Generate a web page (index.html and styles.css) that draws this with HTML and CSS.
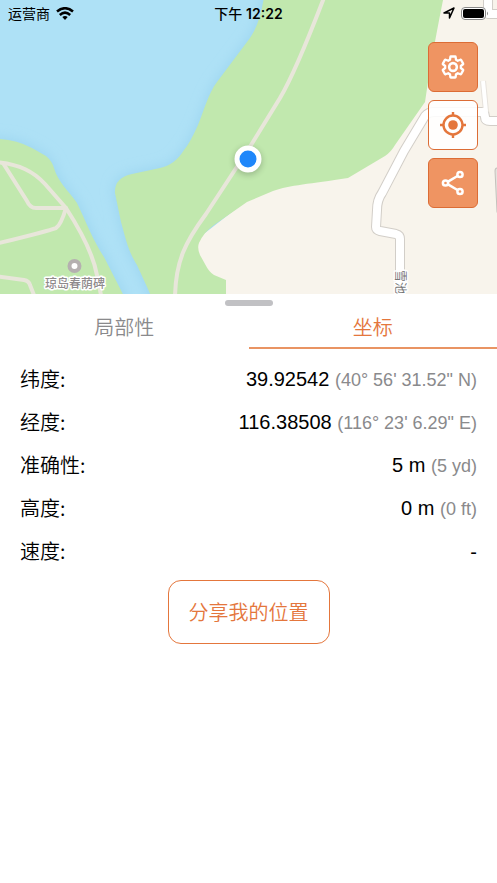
FILE: index.html
```html
<!DOCTYPE html>
<html lang="zh-CN">
<head>
<meta charset="utf-8">
<meta name="viewport" content="width=device-width, initial-scale=1">
<title>坐标</title>
<link rel="stylesheet" href="styles.css">
</head>
<body>
<div class="app">
  <section class="map">
    <svg class="map-canvas" viewBox="0 0 497 294" preserveAspectRatio="xMidYMid slice" aria-hidden="true">
      <defs>
        <filter id="soft" x="-20%" y="-20%" width="140%" height="140%"><feGaussianBlur stdDeviation="6"/></filter>
        <filter id="shade" x="-50%" y="-50%" width="200%" height="200%"><feGaussianBlur stdDeviation="3"/></filter>
        <path id="park" d="M265-10C262 12 258 28 247 42L217 82C208 94 205 108 198 125Q190 143 184 150C178 160 170 166 160 168L132 174Q114 178 115 193L121 222C127 244 129 252 137 265L153 300H226V280L214 275Q209 272 205 264L200 255Q197 248 199 243C202 236 207 230 214 225L247 202L273 191C290 185 310 184 348 178L385 156Q391 152 395 145L425 102Q431 60 443 0V-10Z"/>
        <path id="shore" d="M-10 139H0Q17 140 32 148L46 156Q52 161 54 168C58 182 68 190 77 203C87 224 94 242 104 257L126 300H-10Z"/>
      </defs>
      <rect class="water" width="497" height="294"/>
      <g class="shallows" filter="url(#soft)"><use href="#park"/><use href="#shore"/></g>
      <path class="land" d="M196 300V240L260 190L350 170L420 95L438-5H500V300Z"/>
      <g class="grass"><use href="#park"/><use href="#shore"/></g>
      <g class="trails">
        <path d="M-5 162C20 164 34 172 45 184L66 208Q92 248 97 275L102 300"/>
        <path d="M3 163L27 201Q30 208 36 208H66Q61 225 56 228Q48 231-5 244"/>
        <path d="M-5 276L24 280Q29 281 30 285L36 300"/>
        <path d="M325-5Q296 71 280 98L248 150L206 214C186 241 175 261 175 300"/>
      </g>
      <g class="street-edge">
        <path d="M434 112H486M434 112Q428 112 425 116L404 151L382 193Q377 200 377 210L376 227Q376 230 380 231L396 234Q400 235 400 239V300"/>
        <path d="M484 112L485 117Q485 121 490 121H502M488-5V14H502"/>
        <path class="lane-edge" d="M483 81L486 112"/>
      </g>
      <g class="street">
        <path d="M434 112H486M434 112Q428 112 425 116L404 151L382 193Q377 200 377 210L376 227Q376 230 380 231L396 234Q400 235 400 239V300"/>
        <path d="M484 112L485 117Q485 121 490 121H502M488-5V14H502"/>
        <path class="lane" d="M483 81L486 112"/>
      </g>
      <path class="block" d="M500 168H497Q495 168 495 171L497 212H500Z"/>
      <circle cx="74.500" cy="266" r="5" class="poi"/>
      <text class="poi-name" x="75" y="288">琼岛春荫碑</text>
      <text class="street-name" transform="translate(396 270) rotate(90)">雪池</text>
      <circle class="dot-shadow" cx="248" cy="161" r="14" filter="url(#shade)"/>
      <circle class="dot" cx="248" cy="159" r="11"/>
    </svg>

    <header class="status">
      <div class="carrier"><span>运营商</span>
        <svg width="18" height="13" viewBox="0 0 18 13" aria-hidden="true"><g fill="none" stroke="#000" stroke-width="2.600"><path d="M1 4.500Q9-2 17 4.500"/><path d="M3.800 7.900Q9 3.500 14.200 7.900"/></g><path d="M6.300 10Q9 8 11.700 10L9 13Z"/></svg>
      </div>
      <div class="time">下午 <b>12:22</b></div>
      <div class="power">
        <svg width="12" height="12" viewBox="0 0 12 12" aria-hidden="true"><path d="M1 6L11 1L6.500 11V6Z" fill="none" stroke="#000" stroke-width="1.500" stroke-linejoin="round"/></svg>
        <svg width="28" height="13" viewBox="0 0 28 13" aria-hidden="true"><rect x=".5" y=".5" width="24" height="12" rx="3.500" fill="#fff" stroke="#888"/><rect x="2" y="2" width="21" height="9" rx="2"/><path d="M26 4.500Q28 6.500 26 8.500Z" fill="#888"/></svg>
      </div>
    </header>

    <nav class="tools" aria-label="地图">
      <button class="tool" type="button" aria-label="设置">
        <svg viewBox="0 0 24 24" width="28" height="28"><g fill="none" stroke="currentColor" stroke-width="2.200" stroke-linejoin="round"><path transform="translate(12 12) scale(.9) translate(-12 -12)" d="M19.430 12.980c.04-.32.07-.64.07-.98s-.03-.66-.07-.98l2.110-1.650c.19-.15.24-.42.12-.64l-2-3.460c-.12-.22-.39-.3-.61-.22l-2.490 1c-.52-.4-1.080-.73-1.690-.98l-.38-2.650C14.460 2.180 14.250 2 14 2h-4c-.25 0-.46.18-.49.42l-.38 2.650c-.61.25-1.170.59-1.690.98l-2.490-1c-.23-.09-.49 0-.61.22l-2 3.460c-.13.22-.07.49.12.64l2.110 1.650c-.04.32-.07.65-.07.98s.03.66.07.98l-2.110 1.650c-.19.15-.24.42-.12.64l2 3.460c.12.22.39.3.61.22l2.490-1c.52.4 1.080.73 1.690.98l.38 2.650c.03.24.24.42.49.42h4c.25 0 .46-.18.49-.42l.38-2.650c.61-.25 1.170-.59 1.690-.98l2.490 1c.23.09.49 0 .61-.22l2-3.460c.12-.22.07-.49-.12-.64z"/><circle cx="12" cy="12" r="3.300"/></g></svg>
      </button>
      <button class="tool tool-on" type="button" aria-label="定位">
        <svg viewBox="0 0 28 28" width="28" height="28"><g fill="none" stroke="currentColor" stroke-width="2.400"><circle cx="14" cy="14" r="9.500"/><path d="M14 1V5M14 23V27M1 14H5M23 14H27"/></g><circle cx="14" cy="14" r="4.800" fill="currentColor"/></svg>
      </button>
      <button class="tool" type="button" aria-label="分享">
        <svg viewBox="0 0 28 28" width="28" height="28"><g fill="none" stroke="currentColor" stroke-width="2.500"><circle cx="6.500" cy="14" r="2.600"/><circle cx="21" cy="5.500" r="2.600"/><circle cx="21" cy="22.500" r="2.600"/><path d="M9 12.600L18.500 7M9 15.400L18.500 21"/></g></svg>
      </button>
    </nav>
  </section>

  <main class="sheet">
    <div class="grip"></div>
    <div class="tabs" role="tablist">
      <button class="tab" type="button" role="tab" aria-selected="false">局部性</button>
      <button class="tab tab-on" type="button" role="tab" aria-selected="true">坐标</button>
    </div>
    <table class="facts">
      <tbody>
        <tr><th scope="row">纬度:</th><td>39.92542 <small>(40° 56' 31.52" N)</small></td></tr>
        <tr><th scope="row">经度:</th><td>116.38508 <small>(116° 23' 6.29" E)</small></td></tr>
        <tr><th scope="row">准确性:</th><td>5 m <small>(5 yd)</small></td></tr>
        <tr><th scope="row">高度:</th><td>0 m <small>(0 ft)</small></td></tr>
        <tr><th scope="row">速度:</th><td>-</td></tr>
      </tbody>
    </table>
    <button class="share" type="button">分享我的位置</button>
  </main>
</div>
</body>
</html>
```
FILE: styles.css
```css
* {
  box-sizing: border-box;
}

body {
  margin: 0;
  background: #fff;
  color: #000;
  font-family: "Liberation Sans", "Noto Sans CJK SC", sans-serif;
  font-size: 20px;
}

button {
  font: inherit;
  cursor: pointer;
}

.app {
  display: flex;
  flex-direction: column;
  min-height: 100vh;
}

/* Map */
.map {
  position: relative;
  height: 33.3vh;
  min-height: 220px;
  overflow: hidden;
}

.map-canvas {
  display: block;
  width: 100%;
  height: 100%;
}

.water { fill: #aee1f6; }
.shallows { fill: #9fd7f1; stroke: #9fd7f1; stroke-width: 4; }
.land { fill: #f8f4ec; }
.grass { fill: #c1e8ae; }
.trails { fill: none; stroke: #e8e6da; stroke-width: 4; stroke-linejoin: round; }
.street-edge { fill: none; stroke: #d2cec8; stroke-width: 10; stroke-linejoin: round; }
.street { fill: none; stroke: #fff; stroke-width: 8; stroke-linejoin: round; }
.lane-edge { stroke: #e6e2dc; stroke-width: 6; }
.lane { stroke-width: 4; }
.block { fill: #e6e3de; stroke: #c4c1bc; }
.poi { fill: #fff; stroke: #b5b0b0; stroke-width: 4; }

.poi-name,
.street-name {
  font-family: "Noto Sans CJK SC", sans-serif;
  font-size: 12px;
  fill: #8f8a8c;
  stroke: #fff;
  stroke-width: 3px;
  stroke-linejoin: round;
  paint-order: stroke;
}

.poi-name { text-anchor: middle; font-weight: 500; }
.street-name { fill: #777; }
.dot { fill: #1f87fa; stroke: #fff; stroke-width: 5; }
.dot-shadow { fill: #000; opacity: .2; }

/* Status bar */
.status {
  position: absolute;
  inset: 0 0 auto;
  display: grid;
  grid-template-columns: 1fr auto 1fr;
  align-items: center;
  height: 26px;
  padding: 0 8px;
  font-family: Inter, "Noto Sans CJK SC", sans-serif;
  font-size: 14px;
}

.carrier,
.power {
  display: flex;
  align-items: center;
  gap: 6px;
}

.power { justify-content: flex-end; }
.time { font-weight: 500; }
.time b { font-weight: 600; }

/* Map controls */
.tools {
  position: absolute;
  top: 42px;
  right: 19px;
  display: flex;
  flex-direction: column;
  gap: 8px;
}

.tool {
  display: grid;
  place-items: center;
  width: 50px;
  height: 50px;
  padding: 0;
  border: 1px solid #dc6c35;
  border-radius: 6px;
  background: #ef9462;
  color: #fff;
}

.tool-on {
  background: rgba(255, 255, 255, .88);
  color: #e4763c;
}

/* Details sheet */
.sheet {
  display: flex;
  flex: 1;
  flex-direction: column;
}

.grip {
  align-self: center;
  width: 48px;
  height: 6px;
  margin-top: 6px;
  border-radius: 3px;
  background: #c1c1c4;
}

.tabs {
  display: grid;
  grid-template-columns: 1fr 1fr;
}

.tab {
  height: 43px;
  padding: 0;
  border: 0;
  border-bottom: 2px solid transparent;
  background: none;
  color: #8a8a8c;
  font-family: "Noto Sans CJK SC", sans-serif;
  font-weight: 350;
}

.tab-on {
  border-color: #e99463;
  color: #e4763c;
}

.facts {
  margin: 9px 20px 0;
  border-collapse: collapse;
}

.facts th,
.facts td {
  height: 43px;
  padding: 0;
  line-height: 24px;
}

.facts th {
  padding-bottom: 2px;
  font-family: "Noto Sans CJK SC", sans-serif;
  font-weight: 350;
  text-align: left;
}

.facts td {
  text-align: right;
}

.facts small {
  color: #8a8a8c;
  font-size: 18px;
}

.share {
  align-self: center;
  height: 64px;
  margin-top: 7px;
  padding: 0 20px 2px;
  border: 1px solid #e4763c;
  border-radius: 13px;
  background: #fff;
  color: #e4763c;
  font-family: "Noto Sans CJK SC", sans-serif;
  font-weight: 350;
}
```
